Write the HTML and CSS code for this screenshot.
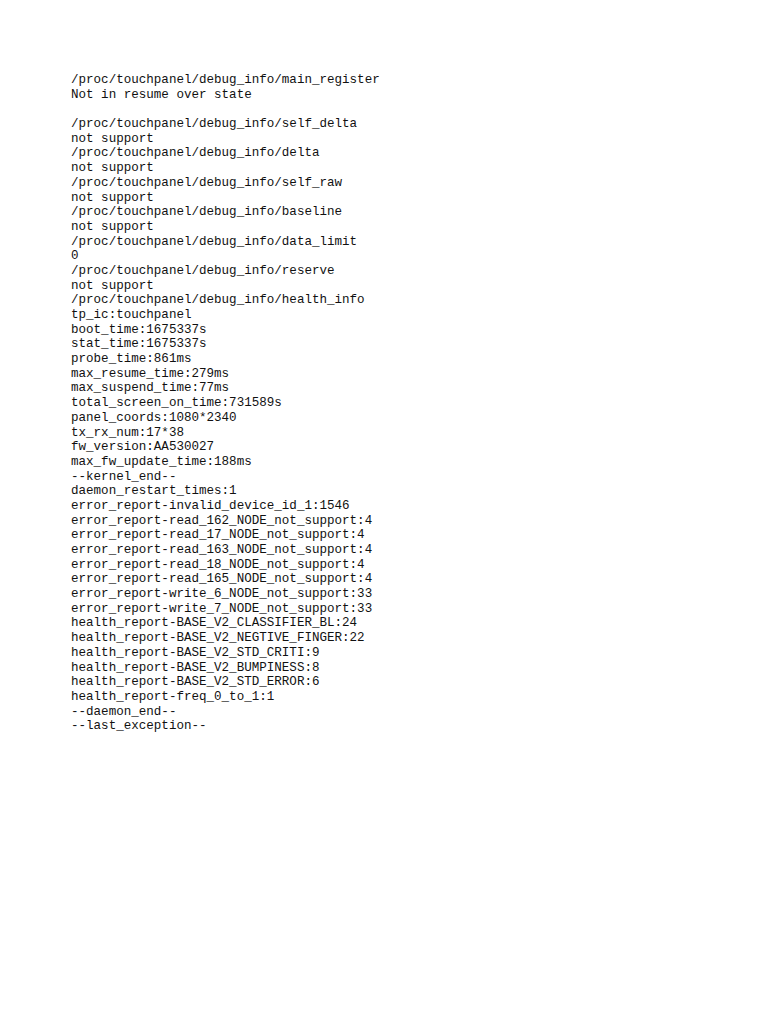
FILE: index.html
```html
<!DOCTYPE html>
<html>
<head>
<meta charset="utf-8">
<link rel="stylesheet" href="styles.css">
</head>
<body>
<pre class="doc">/proc/touchpanel/debug_info/main_register
Not in resume over state

/proc/touchpanel/debug_info/self_delta
not support
/proc/touchpanel/debug_info/delta
not support
/proc/touchpanel/debug_info/self_raw
not support
/proc/touchpanel/debug_info/baseline
not support
/proc/touchpanel/debug_info/data_limit
0
/proc/touchpanel/debug_info/reserve
not support
/proc/touchpanel/debug_info/health_info
tp_ic:touchpanel
boot_time:1675337s
stat_time:1675337s
probe_time:861ms
max_resume_time:279ms
max_suspend_time:77ms
total_screen_on_time:731589s
panel_coords:1080*2340
tx_rx_num:17*38
fw_version:AA530027
max_fw_update_time:188ms
--kernel_end--
daemon_restart_times:1
error_report-invalid_device_id_1:1546
error_report-read_162_NODE_not_support:4
error_report-read_17_NODE_not_support:4
error_report-read_163_NODE_not_support:4
error_report-read_18_NODE_not_support:4
error_report-read_165_NODE_not_support:4
error_report-write_6_NODE_not_support:33
error_report-write_7_NODE_not_support:33
health_report-BASE_V2_CLASSIFIER_BL:24
health_report-BASE_V2_NEGTIVE_FINGER:22
health_report-BASE_V2_STD_CRITI:9
health_report-BASE_V2_BUMPINESS:8
health_report-BASE_V2_STD_ERROR:6
health_report-freq_0_to_1:1
--daemon_end--
--last_exception--</pre>
</body>
</html>
```

FILE: styles.css
```css
html, body {
  margin: 0;
  padding: 0;
  background: #ffffff;
}

.doc {
  margin: 0;
  padding: 73px 0 0 71px;
  font-family: "Liberation Mono", monospace;
  font-size: 12.56px;
  line-height: 14.68px;
  color: #111111;
  white-space: pre;
}
```
